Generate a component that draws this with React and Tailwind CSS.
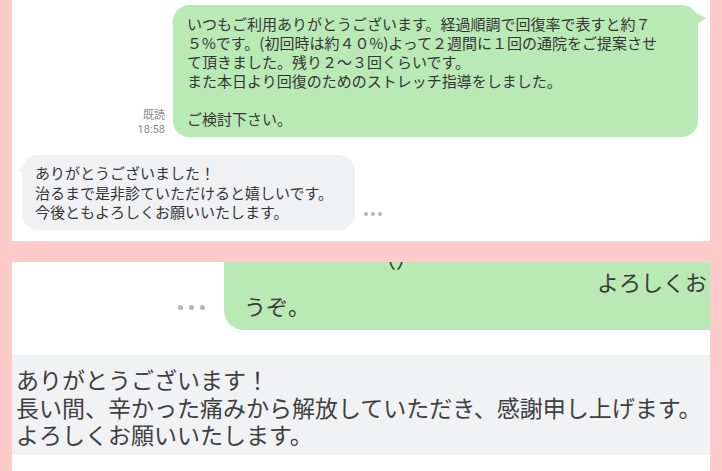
import React from 'react'

const font = "font-['Noto_Sans_CJK_JP','Noto_Sans',sans-serif]"

function Dots({ size = 'sm', className = '' }) {
  const dot = size === 'lg' ? 'w-[5px] h-[5px]' : 'w-[4px] h-[4px]'
  const gap = size === 'lg' ? 'gap-[6px]' : 'gap-[3px]'
  return (
    <div className={`flex ${gap} ${className}`}>
      <span className={`${dot} rounded-full bg-[#b4b6b9]`} />
      <span className={`${dot} rounded-full bg-[#b4b6b9]`} />
      <span className={`${dot} rounded-full bg-[#b4b6b9]`} />
    </div>
  )
}

export default function App() {
  return (
    <div className={`w-[722px] h-[471px] bg-[#ffcaca] px-[12px] flex flex-col overflow-hidden ${font}`}>
      {/* upper screenshot */}
      <div className="h-[241px] bg-white flex flex-col shrink-0">
        <div className="flex justify-end items-end pt-[5px] pr-[12px]">
          <div className="mr-[8px] text-right text-[11px] leading-[15px] text-[#8c8c8c]">
            <div>既読</div>
            <div className="font-['Roboto',sans-serif]">18:58</div>
          </div>
          <div className="relative w-[525px] rounded-[16px] bg-[#b9e9b5] px-[14px] py-[9px] text-[15px] leading-[19px] text-[#353535]">
            <div className="whitespace-nowrap">いつもご利用ありがとうございます。経過順調で回復率で表すと約７</div>
            <div className="whitespace-nowrap">５%です。(初回時は約４０%)よって２週間に１回の通院をご提案させ</div>
            <div className="whitespace-nowrap">て頂きました。残り２～３回くらいです。</div>
            <div className="whitespace-nowrap">また本日より回復のためのストレッチ指導をしました。</div>
            <div className="h-[19px]" />
            <div>ご検討下さい。</div>
            <svg className="absolute -right-[8px] top-[7px]" width="12" height="14" viewBox="0 0 12 14">
              <path d="M0 0 L12 6 L0 14 Z" fill="#b9e9b5" />
            </svg>
          </div>
        </div>

        <div className="flex items-end mt-[18px] pl-[10px]">
          <div className="relative w-[333px] rounded-[16px] bg-[#f0f1f3] pl-[13px] pt-[8px] pb-[8px] text-[15px] leading-[19.5px] text-[#353535]">
            <div>ありがとうございました！</div>
            <div>治るまで是非診ていただけると嬉しいです。</div>
            <div>今後ともよろしくお願いいたします。</div>
            <svg className="absolute -left-[5px] top-[10px]" width="8" height="10" viewBox="0 0 8 10">
              <path d="M8 0 L0 5 L8 10 Z" fill="#f0f1f3" />
            </svg>
          </div>
          <Dots className="ml-[9px] mb-[14px]" />
        </div>
      </div>

      {/* lower screenshot */}
      <div className="mt-[21px] flex-1 bg-white overflow-hidden flex flex-col">
        <div className="flex items-end">
          <Dots size="lg" className="ml-[166px] mb-[20px]" />
          <div className="ml-[19px] -mt-[25px] flex-1 rounded-bl-[20px] bg-[#b9e9b5] pl-[20px] pt-[8px] pb-[13px] text-[22px] leading-[24px] text-[#3a3a3a]">
            <div className="pl-[130px]">（）</div>
            <div className="text-right pr-[3px] whitespace-nowrap">よろしくお</div>
            <div>うぞ。</div>
          </div>
        </div>

        <div className="mt-[25px] h-[100px] bg-[#f1f2f4] pl-[4px] pt-[11px] text-[23px] leading-[27.5px] text-[#404040] whitespace-nowrap">
          <div>ありがとうございます！</div>
          <div>長い間、辛かった痛みから解放していただき、感謝申し上げます。</div>
          <div>よろしくお願いいたします。</div>
        </div>
      </div>
    </div>
  )
}
